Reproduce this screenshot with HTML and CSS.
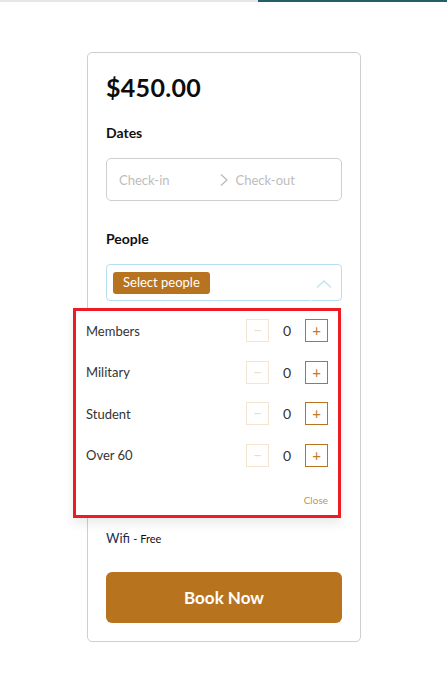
FILE: index.html
```html
<!DOCTYPE html>
<html>
<head>
<meta charset="utf-8">
<link rel="stylesheet" href="styles.css">
</head>
<body>
<div class="topbar"><div class="tb-gray"></div><div class="tb-teal"></div></div>
<div class="card">
  <div class="price">$450.00</div>
  <div class="label dates-label">Dates</div>
  <div class="dates">
    <span class="ph">Check-in</span>
    <svg class="arrow" width="10" height="14" viewBox="0 0 10 14"><path d="M2 1.5 L8 7 L2 12.5" fill="none" stroke="#bbbbbb" stroke-width="1.3"/></svg>
    <span class="ph">Check-out</span>
  </div>
  <div class="label people-label">People</div>
  <div class="select-wrap">
    <div class="select">
      <span class="tag">Select people</span>
      <svg class="chev" width="16" height="10" viewBox="0 0 16 10"><path d="M1 8.5 L8 2 L15 8.5" fill="none" stroke="#c2e4f2" stroke-width="1.4"/></svg>
    </div>
    <div class="popup">
      <div class="notch"></div>
      <div class="rows">
        <div class="row"><span class="rl">Members</span><div class="ctr"><span class="btn minus">&minus;</span><span class="num">0</span><span class="btn plus">+</span></div></div>
        <div class="row"><span class="rl">Military</span><div class="ctr"><span class="btn minus">&minus;</span><span class="num">0</span><span class="btn plus">+</span></div></div>
        <div class="row"><span class="rl">Student</span><div class="ctr"><span class="btn minus">&minus;</span><span class="num">0</span><span class="btn plus">+</span></div></div>
        <div class="row"><span class="rl">Over 60</span><div class="ctr"><span class="btn minus">&minus;</span><span class="num">0</span><span class="btn plus">+</span></div></div>
      </div>
      <div class="close">Close</div>
    </div>
  </div>
  <div class="wifi"><span class="wname">Wifi</span> <span class="wfree">- Free</span></div>
  <div class="book">Book Now</div>
</div>
</body>
</html>
```
FILE: styles.css
```css
* { box-sizing: border-box; }
html, body { margin: 0; padding: 0; background: #ffffff; }
body { font-family: "Lato", "Open Sans", sans-serif; color: #111; width: 447px; height: 684px; overflow: hidden; }
.topbar { display: flex; height: 2px; }
.tb-gray { width: 258px; background: #e6e6e6; }
.tb-teal { flex: 1; background: #255d69; }
.card {
  margin: 50px 0 0 87px;
  width: 274px;
  border: 1px solid #cfcfcf;
  border-radius: 5px;
  padding: 16px 18px 18px 18px;
}
.price { font-size: 25px; font-weight: 700; line-height: 36px; color: #0d0d0d; letter-spacing: 0.3px; }
.label { font-size: 14px; font-weight: 700; line-height: 20px; color: #111; }
.dates-label { margin-top: 18px; }
.dates {
  margin-top: 15px;
  height: 43px;
  border: 1px solid #cfcfcf;
  border-radius: 5px;
  display: flex;
  align-items: center;
  padding-left: 12px;
}
.ph { font-size: 13px; color: #bdbdbd; }
.arrow { margin: 0 7px 0 49px; }
.people-label { margin-top: 28px; }
.select-wrap { position: relative; margin-top: 15px; }
.select {
  height: 37px;
  border: 1px solid #b5e0f1;
  border-radius: 4px;
  display: flex;
  align-items: center;
  justify-content: space-between;
  padding: 0 9px 0 6px;
}
.tag { background: #b87320; color: #fff; font-size: 13px; border-radius: 3px; padding: 3px 10px 4px 10px; line-height: 15px; }
.chev { margin-top: 2px; }
.popup {
  position: absolute;
  left: -33px;
  top: 44px;
  width: 268px;
  height: 210px;
  background: #fff;
  border: 3px solid #ed1c24;
  box-shadow: 0 6px 10px rgba(0,0,0,0.08);
  padding: 8px 10px 0 10px;
}
.notch {
  position: absolute;
  top: -11px;
  left: 227px;
  width: 0; height: 0;
  border-left: 8px solid transparent;
  border-right: 8px solid transparent;
  border-bottom: 8px solid #fff;
}
.rows { display: flex; flex-direction: column; gap: 18.5px; }
.row { display: flex; justify-content: space-between; align-items: center; height: 23px; }
.rl { font-size: 13px; color: #333; }
.ctr { display: flex; align-items: center; }
.btn { width: 23px; height: 23px; display: flex; align-items: center; justify-content: center; font-size: 15px; line-height: 1; }
.minus { border: 1px solid #f4e5d3; color: #efdcc6; }
.plus { border: 1px solid #b87320; color: #bf7a2a; }
.num { width: 36px; text-align: center; font-size: 14px; color: #333; }
.close { text-align: right; font-size: 10px; color: #c8924e; margin-top: 27px; }
.wifi { margin-top: 229px; font-size: 13px; line-height: 16px; }
.wname { color: #1e2a55; }
.wfree { font-size: 11px; color: #111; }
.book {
  margin-top: 25px;
  height: 51px;
  background: #b8731f;
  border-radius: 6px;
  color: #fff;
  font-weight: 700;
  font-size: 17px;
  display: flex;
  align-items: center;
  justify-content: center;
}
```
